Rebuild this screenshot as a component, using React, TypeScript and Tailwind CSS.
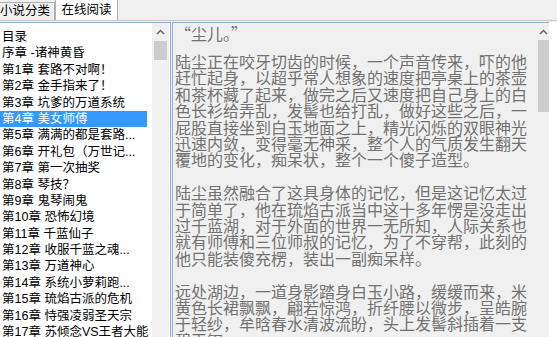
import React from "react";

const chapters = [
  "序章 -诸神黄昏",
  "第1章 套路不对啊！",
  "第2章 金手指来了！",
  "第3章 坑爹的万道系统",
  "第4章 美女师傅",
  "第5章 满满的都是套路...",
  "第6章 开礼包（万世记...",
  "第7章 第一次抽奖",
  "第8章 琴技？",
  "第9章 鬼琴闹鬼",
  "第10章 恐怖幻境",
  "第11章 千蓝仙子",
  "第12章 收服千蓝之魂...",
  "第13章 万道神心",
  "第14章 系统小萝莉跑...",
  "第15章 琉焰古派的危机",
  "第16章 恃强凌弱圣天宗",
  "第17章 苏倾念VS王者大能",
];

const paragraphs = [
  [
    "陆尘正在咬牙切齿的时候，一个声音传来，吓的他",
    "赶忙起身，以超乎常人想象的速度把亭桌上的茶壶",
    "和茶杯藏了起来，做完之后又速度把自己身上的白",
    "色长衫给弄乱，发髻也给打乱，做好这些之后，一",
    "屁股直接坐到白玉地面之上，精光闪烁的双眼神光",
    "迅速内敛，变得毫无神采，整个人的气质发生翻天",
    "覆地的变化，痴呆状，整个一个傻子造型。",
  ],
  [
    "陆尘虽然融合了这具身体的记忆，但是这记忆太过",
    "于简单了，他在琉焰古派当中这十多年愣是没走出",
    "过千蓝湖，对于外面的世界一无所知，人际关系也",
    "就有师傅和三位师叔的记忆，为了不穿帮，此刻的",
    "他只能装傻充楞，装出一副痴呆样。",
  ],
  [
    "远处湖边，一道身影踏身白玉小路，缓缓而来，米",
    "黄色长裙飘飘，翩若惊鸿，折纤腰以微步，呈皓腕",
    "于轻纱，牟晗春水清波流盼，头上发髻斜插着一支",
    "碧玉钗",
  ],
];

function UpArrow() {
  return (
    <svg width="9" height="6" viewBox="0 0 9 6" className="block">
      <path d="M1 5 L4.5 1.5 L8 5" fill="none" stroke="#606060" strokeWidth="1.4" />
    </svg>
  );
}

export default function App() {
  return (
    <div
      className="w-[557px] h-[337px] overflow-hidden bg-[#f0f0f0] text-black"
      style={{ fontFamily: '"Liberation Sans", "Noto Sans CJK SC", sans-serif' }}
    >
      {/* Tabs */}
      <div className="h-[21px] flex items-end border-b border-[#c8c8c8]">
        <div className="h-[18px] -ml-[2px] pl-[1px] pr-[4px] flex items-center border border-b-0 border-[#b0b0b0] bg-[#f0f0f0] text-[12.5px]">
          小说分类
        </div>
        <div className="h-[21px] w-[63px] flex items-center justify-center border border-b-0 border-[#b0b0b0] bg-white text-[12.5px]">
          在线阅读
        </div>
      </div>

      <div className="flex h-[316px] pt-[1px]">
        {/* Chapter list */}
        <div className="w-[171px] flex bg-white border-t border-r border-[#8fb0d8]">
          <div className="w-[152px] pt-[6px] text-[12.5px] leading-[16.4px]">
            <div className="pl-[2px] h-[16.4px]">目录</div>
            {chapters.map((c, i) => (
              <div
                key={c}
                className={
                  i === 4
                    ? "w-[147px] pl-[2px] h-[16.4px] bg-[#3399ff] text-white whitespace-nowrap overflow-hidden"
                    : "pl-[2px] h-[16.4px] whitespace-nowrap overflow-hidden"
                }
              >
                {c}
              </div>
            ))}
          </div>
          <div className="w-[17px] bg-[#f0f0f0] flex flex-col items-center">
            <div className="h-[18px] flex items-center justify-center">
              <UpArrow />
            </div>
            <div className="w-[13px] h-[19px] bg-[#cdcdcd]" />
          </div>
        </div>

        <div className="w-[1px]" />

        {/* Reading area */}
        <div className="w-[377px] flex bg-[#f0f0f0] border-t border-l border-[#8fb0d8]">
          <div
            className="flex-1 pl-[2px] pt-[2px] text-[16px] leading-[16.4px] text-[#727272] whitespace-nowrap overflow-hidden"
            style={{ fontFamily: '"Noto Sans CJK SC", sans-serif' }}
          >
            <div>“尘儿。”</div>
            {paragraphs.map((p, i) => (
              <div key={i} className={i === 0 ? "mt-[11.6px]" : "mt-[16.4px]"}>
                {p.map((l) => (
                  <div key={l}>{l}</div>
                ))}
              </div>
            ))}
          </div>
          <div className="w-[12px] flex flex-col items-center">
            <div className="h-[17px] flex items-center justify-center">
              <UpArrow />
            </div>
            <div className="w-[11px] h-[72px] bg-[#cdcdcd]" />
          </div>
        </div>

        <div className="flex-1 bg-white" />
      </div>
    </div>
  );
}
